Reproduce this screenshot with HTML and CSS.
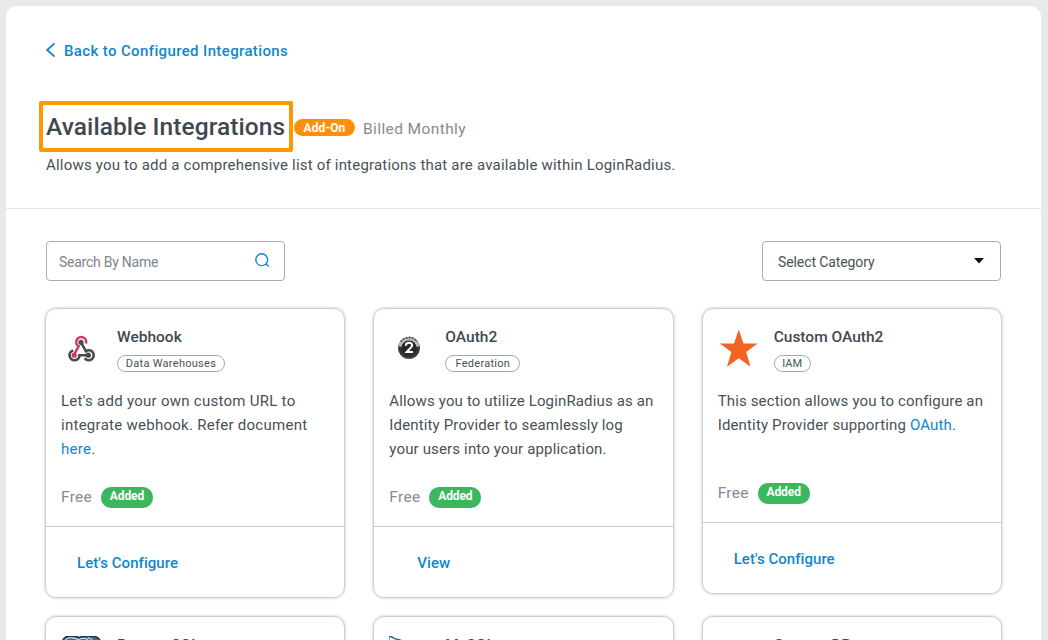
FILE: index.html
```
<!DOCTYPE html>
<html lang="en">
<head>
<meta charset="utf-8">
<title>Available Integrations</title>
<link rel="stylesheet" href="styles.css">
</head>
<body>
<main class="panel">
  <header class="header">
    <a class="back"><svg width="10" height="16" viewBox="0 0 10 16"><path d="M8.600 1.300 1.200 8l7.400 6.700" fill="none" stroke="#0f87cc" stroke-width="1.800"/></svg><span class="back-label">Back to Configured Integrations</span></a>
    <div class="title-row">
      <h1 class="title"><span class="title-text">Available Integrations</span></h1>
      <span class="addon"><span>Add-On</span></span>
      <span class="billing">Billed Monthly</span>
    </div>
    <p class="intro">Allows you to add a comprehensive list of integrations that are available within LoginRadius.</p>
  </header>
  <section class="content">
    <div class="filters">
      <div class="field search"><span class="search-label">Search By Name</span>
        <svg width="16" height="16" viewBox="0 0 16 16" fill="none" stroke="#0f87cc" stroke-width="1.400"><circle cx="7.700" cy="7.700" r="5.900"/><path d="m11.900 11.900 3 2.600"/></svg>
      </div>
      <div class="field select"><span class="select-label">Select Category</span>
        <svg width="10" height="6" viewBox="0 0 10 6"><path d="M0 0h10L5 5.500z" fill="#07121c"/></svg>
      </div>
    </div>
    <div class="grid">
      <article class="card">
        <div class="card-head">
          <svg class="logo" viewBox="0 0 40 40" fill="none" stroke-width="2.600">
            <g stroke="#4a4a4a"><path d="m20 14.300 5.600 10"/><path d="M24.300 23.600a5 5 0 1 1-.600 6.600"/><path d="M12.200 22.400a5 5 0 1 0 6.300 4.900h8.500"/></g>
            <path d="M25 15.500a5 5 0 1 0-7.400 2.800l-4.500 8.300" stroke="#cc3c68"/>
            <circle cx="20" cy="14.300" r="2.600" fill="#4a4a4a"/><circle cx="27.300" cy="27.200" r="2.600" fill="#4a4a4a"/><circle cx="13.200" cy="27.200" r="2.600" fill="#cc3c68"/>
          </svg>
          <div class="meta"><h2 class="name">Webhook</h2><span class="tag t1">Data Warehouses</span></div>
        </div>
        <p class="desc desc-wide">Let's add your own custom URL to<br>integrate webhook. Refer document<br><a>here</a>.</p>
        <div class="price"><span class="free">Free</span><span class="added">Added</span></div>
        <footer class="foot"><a class="action">Let's Configure</a></footer>
      </article>
      <article class="card">
        <div class="card-head">
          <svg class="logo" viewBox="0 0 40 40">
            <circle cx="20" cy="20" r="10.900" fill="#353535"/>
            <path d="M9.300 18a10.900 10.900 0 0 1 21.400 0l-3 1a8 8 0 0 0-15.400 0z" fill="#b8b8b8"/>
            <path d="M12 13.500a10 10 0 0 1 16 0" fill="none" stroke="#555" stroke-width="2" stroke-dasharray="1.500 1.500"/>
            <circle cx="20" cy="20" r="7.500" fill="#292929"/>
            <path d="M13 27.800a10 10 0 0 0 14 0" fill="none" stroke="#888" stroke-width="1" stroke-dasharray="1.500 1.500"/>
            <path d="M16.800 17.800c0-4 6.400-4 6.400-.5 0 2.400-3.700 4-5.700 6.700H24" fill="none" stroke="#fff" stroke-width="2.100"/>
          </svg>
          <div class="meta"><h2 class="name">OAuth2</h2><span class="tag t2">Federation</span></div>
        </div>
        <p class="desc">Allows you to utilize LoginRadius as an<br>Identity Provider to seamlessly log<br>your users into your application.</p>
        <div class="price"><span class="free">Free</span><span class="added">Added</span></div>
        <footer class="foot foot-view"><a class="action">View</a></footer>
      </article>
      <article class="card">
        <div class="card-head">
          <svg class="logo" viewBox="0 0 40 40"><path d="m20.800 1.500 4.600 14 14.100-.1-11.300 8.700 4.300 14.700-11.700-8.600L9 38.800l4.400-14.700-11.600-8.700 14.200.1z" fill="#f26322"/></svg>
          <div class="meta"><h2 class="name">Custom OAuth2</h2><span class="tag t3">IAM</span></div>
        </div>
        <p class="desc">This section allows you to configure an<br>Identity Provider supporting <a>OAuth</a>.</p>
        <div class="price"><span class="free">Free</span><span class="added">Added</span></div>
        <footer class="foot"><a class="action">Let's Configure</a></footer>
      </article>
      <article class="card">
        <div class="card-head">
          <svg class="logo" viewBox="0 0 40 40"><path d="M.8 12C0 4 3 0 9 0c4 0 6 .4 9 1.400 3-1 6-1.700 11-1.400 7 0 11 2 10.200 8L37 26H5z" fill="#336b9b" stroke="#222" stroke-width="1.200"/><path d="M2.500 7C4 1 12 .8 17 3.500M15 8c1-6 8-6.500 12-4.500M27 2c4 .5 6.500 3 7 8" fill="none" stroke="#fff" stroke-width="1"/></svg>
          <div class="meta"><h2 class="name">PostgreSQL</h2></div>
        </div>
      </article>
      <article class="card">
        <div class="card-head">
          <svg class="logo" viewBox="0 0 40 40"><path d="M3 20C1 11-1 4 0 1c2-2 4 1.500 7 2 7 1 14 6 19 16" fill="none" stroke="#1f6d83" stroke-width="1.500"/></svg>
          <div class="meta"><h2 class="name">MySQL</h2></div>
        </div>
      </article>
      <article class="card">
        <div class="card-head">
          <div class="logo"></div>
          <div class="meta"><h2 class="name">Custom DB</h2></div>
        </div>
      </article>
    </div>
  </section>
</main>
</body>
</html>
```
FILE: styles.css
```
* { box-sizing: border-box; }
body {
  margin: 0;
  height: 640px;
  overflow: hidden;
  padding: 6px 7px 0 6px;
  background: #e8e9eb;
  color: #485158;
  font-family: Roboto, "Liberation Sans", sans-serif;
  font-size: 16px;
  line-height: 24px;
  white-space: nowrap;
}
h1, h2, p { margin: 0; }
a { color: #0f87cc; }
.panel { background: #fff; border-radius: 11px 11px 0 0; height: 634px; overflow: hidden; }
.header { height: 203px; padding: 32px 33px 0; border-bottom: 1px solid #e4e5e6; }
.back { display: flex; align-items: center; gap: 8px; height: 24px; padding-left: 7px; font-size: 15px; font-weight: 500; }
.back-label { padding-top: 1px; letter-spacing: .37px; }
.title-row { display: flex; align-items: center; margin-top: 39px; height: 51px; }
.title { display: flex; align-items: center; width: 254px; height: 51px; padding-left: 3px; border: 4px solid #ff9800; border-radius: 2px; font-size: 24.500px; font-weight: 500; color: #3f484f; }
.title-text { letter-spacing: .08px; }
.addon { display: flex; align-items: center; justify-content: center; width: 61px; height: 17px; margin: 2px 8px 0 1px; border-radius: 9px; background: #ff8f0a; color: #fff; font-size: 12px; font-weight: 700; line-height: 17px; }
.addon span { padding-top: 1px; letter-spacing: .1px; }
.billing { padding-top: 4px; color: #858b90; font-size: 15.500px; letter-spacing: .4px; }
.intro { margin: 1px 0 0 7px; font-size: 15px; letter-spacing: .2px; }
.content { padding: 32px 39px 0; }
.filters { display: flex; justify-content: space-between; padding: 0 1px; }
.field { display: flex; align-items: center; justify-content: space-between; width: 239px; height: 40px; border: 1px solid #a9adb0; border-radius: 4px; font-size: 14px; }
.search { padding: 2px 14px 0 12px; color: #7c858c; }
.search-label { letter-spacing: -.25px; }
.search svg { margin-top: -4px; }
.select { padding: 0 16px 0 15px; }
.select-label { padding-top: 1px; letter-spacing: -.1px; }
.grid { display: grid; grid-template-columns: repeat(3, 1fr); column-gap: 28px; row-gap: 18px; align-items: start; margin-top: 27px; width: 957px; }
.card { border: 1px solid #cbcecf; border-radius: 11px; box-shadow: 0 0 3px rgba(70, 90, 80, .35); }
.card-head { display: flex; gap: 16px; height: 80px; padding: 19px 15px 0; }
.logo { width: 40px; height: 40px; flex: none; }
.meta { display: flex; flex-direction: column; align-items: flex-start; margin-top: -3px; }
.name { font-size: 15.500px; font-weight: 500; line-height: 24px; color: #3f484f; }
.tag { display: flex; align-items: center; justify-content: center; height: 17px; margin-top: 6px; border: 1px solid #a3a7aa; border-radius: 9px; font-size: 11px; line-height: 15px; letter-spacing: .28px; }
.t1 { width: 108px; }
.t2 { width: 75px; }
.t3 { width: 37px; letter-spacing: 0; }
.desc { min-height: 68px; padding-left: 15px; padding-right: 10px; font-size: 15px; letter-spacing: .15px; }
.desc-wide { letter-spacing: .27px; }
.price { display: flex; align-items: center; gap: 8px; height: 65px; padding: 7px 15px 0; }
.free { width: 32px; color: #858b90; font-size: 15.500px; letter-spacing: .3px; }
.added { width: 52px; height: 21px; border-radius: 10px; background: #3bb75e; color: #fff; font-size: 12px; font-weight: 700; line-height: 19px; text-align: center; letter-spacing: -.1px; }
.foot { height: 71px; padding: 24px 0 0 31px; border-top: 1px solid #c9cccd; font-size: 15px; font-weight: 500; }
.action { letter-spacing: .05px; }
.foot-view { padding-left: 43px; }
```
